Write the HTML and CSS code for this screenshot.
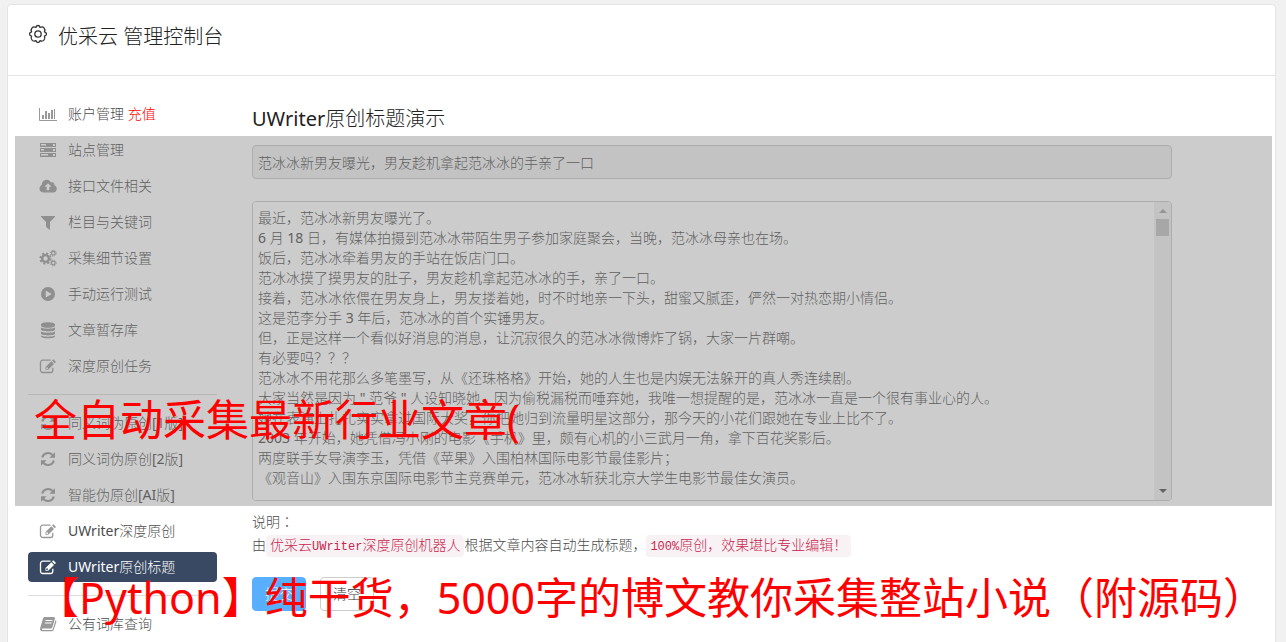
FILE: index.html
```html
<!DOCTYPE html>
<html lang="zh-CN">
<head>
<meta charset="utf-8">
<title>优采云 管理控制台</title>
<link rel="stylesheet" href="styles.css">
</head>
<body>
<svg class="sprite" aria-hidden="true">
  <symbol id="i-chart" viewBox="0 0 18 18"><path d="M.5 3v12.500H18" fill="none" stroke="currentColor"/><path d="M3 10h2v4H3zM6 6h2v8H6zM9 8h2v6H9zM12 5h2v9h-2zM15 4h1v10h-1z"/></symbol>
  <symbol id="i-server" viewBox="0 0 18 18"><path fill-rule="evenodd" d="M1 2h16v4H1zM2 3v1.500h5V3zM14 3v2h2V3zM1 7h16v4H1zM2 8v1.500h3V8zM14 8v2h2V8zM1 12h16v4H1zM2 13v1.500h7V13zM14 13v2h2v-2z"/></symbol>
  <symbol id="i-cloud" viewBox="0 0 18 18"><path fill-rule="evenodd" d="M4.200 15.500A3.900 3.900 0 0 1 .5 11.600c0-1.600 1-2.900 2.300-3.500C2.700 5 4.900 2.700 7.600 2.700c2 0 3.600 1.200 4.400 2.900 1.800-.9 3.800.6 3.300 2.700 1.500.4 2.500 1.700 2.500 3.400 0 2.100-1.600 3.800-3.700 3.800zM9 6.200 5.500 9.800h2.200v3.400h2.600V9.800h2.200z"/></symbol>
  <symbol id="i-filter" viewBox="0 0 18 18"><path d="M2.600 3h12.800c.6 0 .8.700.4 1.100L11 9v7.200c0 .5-.5.700-.9.400L7.300 14c-.2-.2-.3-.4-.3-.6V9L2.200 4.100C1.800 3.700 2 3 2.600 3z"/></symbol>
  <symbol id="i-cogs" viewBox="0 0 18 18"><circle cx="6.500" cy="9.500" r="3.400" fill="none" stroke="currentColor" stroke-width="2.400"/><circle cx="6.500" cy="9.500" r="5.200" fill="none" stroke="currentColor" stroke-width="1.800" stroke-dasharray="2.100 1.984"/><circle cx="14.300" cy="4.200" r="1.800" fill="none" stroke="currentColor" stroke-width="1.200"/><circle cx="14.300" cy="4.200" r="2.900" fill="none" stroke="currentColor" stroke-width="1" stroke-dasharray="1.200 1.077"/><circle cx="14.300" cy="14" r="1.800" fill="none" stroke="currentColor" stroke-width="1.200"/><circle cx="14.300" cy="14" r="2.900" fill="none" stroke="currentColor" stroke-width="1" stroke-dasharray="1.200 1.077"/></symbol>
  <symbol id="i-play" viewBox="0 0 18 18"><path fill-rule="evenodd" d="M9 2a7 7 0 1 1 0 14A7 7 0 0 1 9 2zM6.700 5.500v7L12.800 9z"/></symbol>
  <symbol id="i-database" viewBox="0 0 18 18"><path d="M2 3.600C2 .5 16 .5 16 3.600v.8c0 3.100-14 3.100-14 0zM2 6.600c3 1.600 11 1.600 14 0v2c0 2.500-14 2.500-14 0zM2 10.600c3 1.600 11 1.600 14 0v2c0 2.500-14 2.500-14 0zM2 14.500c3 1.600 11 1.600 14 0v.7c0 2.800-14 2.800-14 0z"/></symbol>
  <symbol id="i-edit" viewBox="0 0 18 18"><path d="M11.500 3.200H3.700a2.200 2.200 0 0 0-2.200 2.200v7.900a2.200 2.200 0 0 0 2.200 2.200h7.900a2.200 2.200 0 0 0 2.200-2.200v-2.600" fill="none" stroke="currentColor" stroke-width="1.300"/><path fill-rule="evenodd" d="M14.300 2.200 17 4.900l-1.300 1.300L13 3.500zM12.300 4.200 15 6.900 9.200 12.700H6.500V10zM8 10l-.7.700v1.200h1.200l.7-.7z"/></symbol>
  <symbol id="i-refresh" viewBox="0 0 18 18"><path d="M3.200 7.600A6 6 0 0 1 13.500 5M14.800 10.400A6 6 0 0 1 4.500 13" fill="none" stroke="currentColor" stroke-width="2.100"/><path d="M16 2.200v5.600h-5.600zM2 15.800v-5.600h5.600z"/></symbol>
  <symbol id="i-book" viewBox="0 0 18 18"><path fill-rule="evenodd" d="M6 2h8.600c1 0 1.600.8 1.300 1.700l-2.500 8.500c-.2.800-.9 1.300-1.700 1.300H3.600c-1.200 0-1 1.500.1 1.500h9.100c.5 0 .8-.2 1-.7l2.700-9.100c.8.400 1 1 .8 1.700L14.700 15c-.2.700-.9 1.200-1.700 1.200H3.400c-1.700 0-2.900-1.600-2.200-3.200L4 3.500C4.300 2.500 5 2 6 2zM6.700 5l-.3 1h6.800l.3-1zM6 7.500l-.3 1h6.800l.3-1z"/></symbol>
  <symbol id="i-gear" viewBox="0 0 20 20"><path d="M10 1.500Q11.600 1.500 12 3.400Q14.600 2 16 4Q17.600 5.600 16.400 7.800Q18.500 8.400 18.500 10Q18.500 11.600 16.400 12.200Q17.600 14.400 16 16Q14.600 18 12 16.600Q11.600 18.500 10 18.500Q8.400 18.500 8 16.600Q5.400 18 4 16Q2.400 14.400 3.600 12.200Q1.500 11.600 1.500 10Q1.500 8.400 3.600 7.800Q2.400 5.600 4 4Q5.400 2 8 3.400Q8.400 1.500 10 1.500Z" fill="none" stroke="currentColor" stroke-width="1.300" stroke-linejoin="round"/><circle cx="10" cy="10" r="3.200" fill="none" stroke="currentColor" stroke-width="1.300"/></symbol>
</svg>

<div class="card">
  <header class="card-header">
    <svg class="gear"><use href="#i-gear"/></svg>
    <h1>优采云 管理控制台</h1>
  </header>
  <div class="card-body">
    <nav class="sidebar">
      <a href="#"><svg><use href="#i-chart"/></svg><span>账户管理 <em>充值</em></span></a>
      <a href="#"><svg><use href="#i-server"/></svg>站点管理</a>
      <a href="#"><svg><use href="#i-cloud"/></svg>接口文件相关</a>
      <a href="#"><svg><use href="#i-filter"/></svg>栏目与关键词</a>
      <a href="#"><svg><use href="#i-cogs"/></svg>采集细节设置</a>
      <a href="#"><svg><use href="#i-play"/></svg>手动运行测试</a>
      <a href="#"><svg><use href="#i-database"/></svg>文章暂存库</a>
      <a href="#"><svg><use href="#i-edit"/></svg>深度原创任务</a>
      <hr>
      <a href="#"><svg><use href="#i-refresh"/></svg>同义词伪原创[1版]</a>
      <a href="#"><svg><use href="#i-refresh"/></svg>同义词伪原创[2版]</a>
      <a href="#"><svg><use href="#i-refresh"/></svg>智能伪原创[AI版]</a>
      <a href="#"><svg><use href="#i-edit"/></svg>UWriter深度原创</a>
      <a href="#" class="active"><svg><use href="#i-edit"/></svg>UWriter原创标题</a>
      <hr>
      <a href="#"><svg><use href="#i-book"/></svg>公有词库查询</a>
    </nav>
    <main class="content">
      <form>
        <h2>UWriter原创标题演示</h2>
        <input class="title-field" type="text" aria-label="标题" value="范冰冰新男友曝光，男友趁机拿起范冰冰的手亲了一口" readonly>
        <div class="editor">
          <textarea aria-label="文章内容">最近，范冰冰新男友曝光了。
6 月 18 日，有媒体拍摄到范冰冰带陌生男子参加家庭聚会，当晚，范冰冰母亲也在场。
饭后，范冰冰牵着男友的手站在饭店门口。
范冰冰摸了摸男友的肚子，男友趁机拿起范冰冰的手，亲了一口。
接着，范冰冰依偎在男友身上，男友搂着她，时不时地亲一下头，甜蜜又腻歪，俨然一对热恋期小情侣。
这是范李分手 3 年后，范冰冰的首个实锤男友。
但，正是这样一个看似好消息的消息，让沉寂很久的范冰冰微博炸了锅，大家一片群嘲。
有必要吗？？？
范冰冰不用花那么多笔墨写，从《还珠格格》开始，她的人生也是内娱无法躲开的真人秀连续剧。
大家当然是因为 " 范爷 " 人设知晓她，因为偷税漏税而唾弃她，我唯一想提醒的是，范冰冰一直是一个很有事业心的人。
她在表演上扎扎实实拿过国际大奖，你把她归到流量明星这部分，那今天的小花们跟她在专业上比不了。
2003 年开始，她凭借冯小刚的电影《手机》里，颇有心机的小三武月一角，拿下百花奖影后。
两度联手女导演李玉，凭借《苹果》入围柏林国际电影节最佳影片；
《观音山》入围东京国际电影节主竞赛单元，范冰冰斩获北京大学生电影节最佳女演员。</textarea>
          <div class="scrollbar" aria-hidden="true"><i class="up"></i><i class="thumb"></i><i class="down"></i></div>
        </div>
        <p>说明<span class="mid" lang="zh-TW">：</span></p>
        <p>由<code>优采云<span>UWriter</span>深度原创机器人</code>根据文章内容自动生成标题，<code><span>100%</span>原创，效果堪比专业编辑！</code></p>
        <div class="actions">
          <button class="primary" type="submit">提交</button>
          <button type="reset">清空</button>
        </div>
      </form>
    </main>
  </div>
</div>

<div class="shade"></div>
<div class="caption caption-top">全自动采集最新行业文章(</div>
<div class="caption caption-bottom">【Python】纯干货，5000字的博文教你采集整站小说（附源码）</div>
</body>
</html>
```
FILE: styles.css
```css
* { box-sizing: border-box; }
html, body { height: 100%; }
body {
  margin: 0;
  padding: 4px 10px 0 7px;
  position: relative;
  overflow: hidden;
  background: #f1f1f1;
  color: #4c4c4c;
  font: 400 14px/20px "Noto Sans", "Noto Sans CJK SC Light", "Noto Sans CJK SC", sans-serif;
}
.sprite { position: absolute; width: 0; height: 0; }
svg { fill: currentColor; flex: none; }

.card {
  min-height: calc(100% + 10px);
  background: #fff;
  border: 1px solid #e4e4e4;
  border-radius: 4px;
}
.card-header {
  display: flex;
  align-items: center;
  gap: 10px;
  height: 71px;
  padding: 0 20px 6px;
  border-bottom: 1px solid #e4e4e4;
  color: #333;
}
.gear { width: 20px; height: 20px; margin-bottom: 6px; }
h1, h2 { margin: 0; color: #222; font-size: 20px; font-weight: 400; line-height: 28px; }

.card-body { display: flex; gap: 35px; padding: 23px 20px 0; }
.sidebar { display: flex; flex-direction: column; gap: 6px; width: 189px; flex: none; }
.sidebar a {
  display: flex;
  align-items: center;
  gap: 10px;
  height: 30px;
  padding: 0 10px;
  border-radius: 4px;
  color: #4c4c4c;
  text-decoration: none;
  white-space: nowrap;
}
.sidebar svg { width: 20px; height: 18px; color: #999; }
.sidebar em { color: #f00; font-style: normal; }
.sidebar .active { background: #3a4963; color: #fff; }
.sidebar .active svg { color: #fff; }
.sidebar hr { width: 100%; margin: 7px 0; border: 0; border-top: 1px solid #ddd; }

.content { flex: 1; max-width: 920px; padding-top: 6px; }
.title-field {
  display: block;
  width: 100%;
  height: 34px;
  margin: 12px 0 22px;
  padding: 6px 5px;
  border: 1px solid #ccc;
  border-radius: 4px;
  background: #f0f0f0;
  color: #4c4c4c;
  font: inherit;
}
.editor {
  display: flex;
  height: 300px;
  margin-bottom: 11px;
  border: 1px solid #ccc;
  border-radius: 4px;
  overflow: hidden;
}
.editor textarea {
  flex: 1;
  padding: 6px 5px;
  border: 0;
  outline: 0;
  resize: none;
  overflow: hidden;
  background: #fff;
  color: #4c4c4c;
  font: inherit;
}
.scrollbar {
  display: flex;
  flex-direction: column;
  align-items: center;
  width: 17px;
  padding: 7px 0;
  background: #f1f1f1;
}
.up, .down { border: 4px solid transparent; border-top-width: 0; border-bottom: 4px solid #a3a3a3; }
.down { margin-top: auto; border-bottom-width: 0; border-top: 4px solid #505050; }
.thumb { width: 13px; height: 17px; margin-top: 6px; background: #c1c1c1; }

p { margin: 0 0 3px; }
code {
  display: inline-block;
  padding: 0 4px;
  border-radius: 4px;
  background: #f9f2f4;
  color: #c7254e;
  font: 400 14px/19px "Noto Sans CJK SC Light", "Noto Sans CJK SC", sans-serif;
  vertical-align: top;
}
code span { font: 12px/19px "Liberation Mono", monospace; }
.mid { font-family: "Noto Sans CJK TC Light", "Noto Sans CJK TC", sans-serif; line-height: 1; }
.actions { display: flex; gap: 14px; margin-top: 20px; }
button {
  height: 34px;
  padding: 0 12px;
  border: 1px solid #ccc;
  border-radius: 4px;
  background: #fff;
  color: #333;
  font: inherit;
}
.primary { border-color: #58aeff; background: #58aeff; color: #fff; }

.shade {
  position: absolute;
  top: 136px;
  left: 15px;
  right: 14px;
  height: 370px;
  background: rgba(128, 128, 128, .4);
}
.caption {
  position: absolute;
  color: #f00;
  font-family: "Noto Sans", "Noto Sans CJK SC", sans-serif;
  font-size: 43px;
  line-height: 60px;
  white-space: nowrap;
}
.caption-top { top: 390px; left: 34px; }
.caption-bottom { top: 568px; left: 36px; }
```
